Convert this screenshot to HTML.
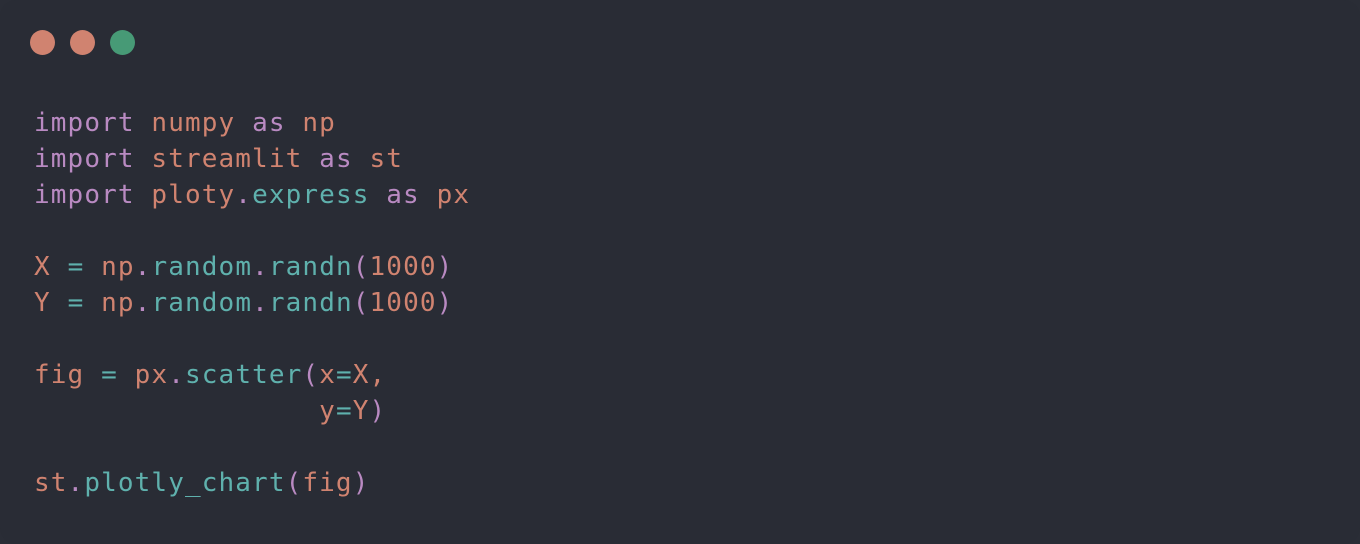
<!DOCTYPE html>
<html><head><meta charset="utf-8"><style>
html,body{margin:0;padding:0;width:1360px;height:544px;background:#2a2d36;overflow:hidden}
.card{position:absolute;left:0;top:0;width:1360px;height:544px;background:#292c35;border-radius:16px}
.dot{position:absolute;top:30px;width:25px;height:25px;border-radius:50%}
pre{position:absolute;left:34px;top:105px;margin:0;font-family:"DejaVu Sans Mono","Liberation Mono",monospace;font-size:26px;letter-spacing:1.12px;line-height:36px;color:#d08370}
.k{color:#b98ac2}.s{color:#d08370}.t{color:#5fb1ad}.p{color:#b98ac2}
</style></head><body>
<div class="card">
<div class="dot" style="left:30px;background:#d08370"></div>
<div class="dot" style="left:70px;background:#d08370"></div>
<div class="dot" style="left:110px;background:#479a76"></div>
<pre><span class="k">import</span> <span class="s">numpy</span> <span class="k">as</span> <span class="s">np</span>
<span class="k">import</span> <span class="s">streamlit</span> <span class="k">as</span> <span class="s">st</span>
<span class="k">import</span> <span class="s">ploty</span><span class="p">.</span><span class="t">express</span> <span class="k">as</span> <span class="s">px</span>

<span class="s">X</span> <span class="t">=</span> <span class="s">np</span><span class="p">.</span><span class="t">random</span><span class="p">.</span><span class="t">randn</span><span class="p">(</span><span class="s">1000</span><span class="p">)</span>
<span class="s">Y</span> <span class="t">=</span> <span class="s">np</span><span class="p">.</span><span class="t">random</span><span class="p">.</span><span class="t">randn</span><span class="p">(</span><span class="s">1000</span><span class="p">)</span>

<span class="s">fig</span> <span class="t">=</span> <span class="s">px</span><span class="p">.</span><span class="t">scatter</span><span class="p">(</span><span class="s">x</span><span class="t">=</span><span class="s">X,</span>
                 <span class="s">y</span><span class="t">=</span><span class="s">Y</span><span class="p">)</span>

<span class="s">st</span><span class="p">.</span><span class="t">plotly_chart</span><span class="p">(</span><span class="s">fig</span><span class="p">)</span></pre>
</div>
</body></html>
